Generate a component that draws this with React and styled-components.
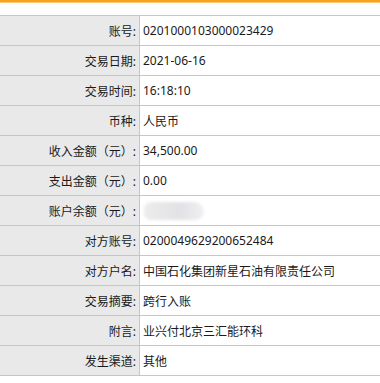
import React from "react";
import styled, { createGlobalStyle } from "styled-components";

const Global = createGlobalStyle`
  html, body {
    margin: 0;
    padding: 0;
    background: #fff;
  }
  body {
    font-family: "Noto Sans", "Noto Sans CJK SC", sans-serif;
    font-size: 12px;
    color: #1a1a1a;
  }
`;

const Page = styled.div`
  width: 380px;
  height: 383px;
  overflow: hidden;
  border-top: 2px solid #f6a31f;
  box-shadow: inset 0 1px 0 #fbc76e;
  padding-top: 13px;
  box-sizing: border-box;
`;

const Table = styled.div`
  display: grid;
  grid-template-columns: 140px 1fr;
  border-top: 1px solid #c6c6c6;
`;

const Label = styled.div`
  height: 29px;
  background: #e9e9e9;
  border-right: 1px solid #c6c6c6;
  border-bottom: 1px solid #c6c6c6;
  display: flex;
  align-items: center;
  justify-content: flex-end;
  padding-right: 3px;
`;

const Value = styled.div`
  height: 29px;
  border-bottom: 1px solid #c6c6c6;
  display: flex;
  align-items: center;
  padding-left: 3px;
  white-space: nowrap;
`;

const Hidden = styled.span`
  display: inline-block;
  width: 60px;
  height: 18px;
  margin-left: 1px;
  border-radius: 9px 12px 10px 8px;
  background: linear-gradient(90deg, #ececec, #e2e2e6 60%, #f0f0f2);
  filter: blur(1.5px);
`;

const rows = [
  ["账号", "0201000103000023429"],
  ["交易日期", "2021-06-16"],
  ["交易时间", "16:18:10"],
  ["币种", "人民币"],
  ["收入金额（元）", "34,500.00"],
  ["支出金额（元）", "0.00"],
  ["账户余额（元）", null],
  ["对方账号", "0200049629200652484"],
  ["对方户名", "中国石化集团新星石油有限责任公司"],
  ["交易摘要", "跨行入账"],
  ["附言", "业兴付北京三汇能环科"],
  ["发生渠道", "其他"],
];

export default function App() {
  return (
    <Page>
      <Global />
      <Table>
        {rows.map(([k, v]) => (
          <React.Fragment key={k}>
            <Label>{k}:</Label>
            <Value>{v === null ? <Hidden /> : v}</Value>
          </React.Fragment>
        ))}
      </Table>
    </Page>
  );
}
